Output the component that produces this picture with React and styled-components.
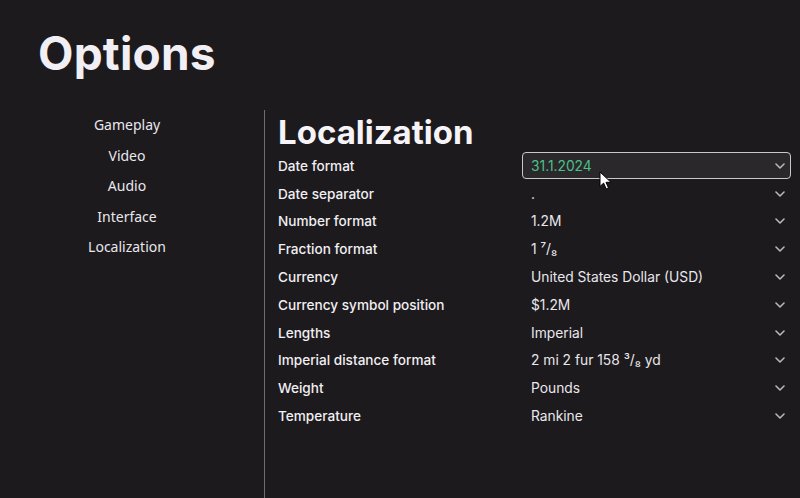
import React from "react";
import styled, { createGlobalStyle } from "styled-components";

const GlobalStyle = createGlobalStyle`
  html, body {
    margin: 0;
    padding: 0;
    background: #1c1a1d;
    height: 100%;
  }
  #root {
    min-height: 100%;
  }
`;

const sections = ["Gameplay", "Video", "Audio", "Interface", "Localization"];

const settings = [
  { label: "Date format", value: "31.1.2024", focused: true },
  { label: "Date separator", value: "." },
  { label: "Number format", value: "1.2M" },
  { label: "Fraction format", value: "1 ⁷/₈" },
  { label: "Currency", value: "United States Dollar (USD)" },
  { label: "Currency symbol position", value: "$1.2M" },
  { label: "Lengths", value: "Imperial" },
  { label: "Imperial distance format", value: "2 mi 2 fur 158 ³/₈ yd" },
  { label: "Weight", value: "Pounds" },
  { label: "Temperature", value: "Rankine" },
];

const Chevron = () => (
  <svg width="10" height="6" viewBox="0 0 10 6" fill="none">
    <path d="M1 1l4 4 4-4" stroke="#b8b6bb" strokeWidth="1.6" strokeLinecap="round" strokeLinejoin="round" />
  </svg>
);

const Pointer = () => (
  <svg width="13" height="19" viewBox="0 0 13 19">
    <path d="M1 1v14.5l3.6-3.4 2.6 5.8 2.3-1-2.5-5.6h5z" fill="#fff" stroke="#000" strokeWidth="1" strokeLinejoin="round" />
  </svg>
);

const App = () => {
  return (
    <>
      <GlobalStyle />
      <Page>
        <Title>Options</Title>
        <Body>
          <Sidebar>
            {sections.map((s) => (
              <NavItem key={s}>{s}</NavItem>
            ))}
          </Sidebar>
          <Content>
            <Heading>Localization</Heading>
            <List>
              {settings.map((item) => (
                <Row key={item.label}>
                  <Label>{item.label}</Label>
                  <Select focused={item.focused}>
                    <Value focused={item.focused}>{item.value}</Value>
                    <Chevron />
                    {item.focused && (
                      <Cursor>
                        <Pointer />
                      </Cursor>
                    )}
                  </Select>
                </Row>
              ))}
            </List>
          </Content>
        </Body>
      </Page>
    </>
  );
};

const Page = styled.div`
  width: 800px;
  height: 498px;
  overflow: hidden;
  background: #1c1a1d;
  display: flex;
  flex-direction: column;
  font-family: Inter, "Noto Sans", sans-serif;
  color: #f1eff3;
`;

const Title = styled.h1`
  margin: 0;
  padding: 24px 0 0 38px;
  height: 86px;
  box-sizing: border-box;
  font-size: 46px;
  font-weight: 700;
  letter-spacing: 0.2px;
  line-height: 58px;
  color: #f1eff4;
`;

const Body = styled.div`
  flex: 1;
  display: grid;
  grid-template-columns: 265px 1fr;
  margin-top: 24px;
`;

const Sidebar = styled.nav`
  display: flex;
  flex-direction: column;
  align-items: center;
  padding: 5px 10px 0 0;
  gap: 10.5px;
  border-right: 1px solid #6e6c71;
`;

const NavItem = styled.div`
  font-family: "Noto Sans", sans-serif;
  font-size: 14px;
  line-height: 20px;
  color: #e9e7ec;
`;

const Content = styled.section`
  padding: 2px 0 0 13px;
`;

const Heading = styled.h2`
  margin: 0;
  font-size: 33px;
  font-weight: 700;
  line-height: 40px;
  color: #f6f4f8;
`;

const List = styled.div`
  display: flex;
  flex-direction: column;
`;

const Row = styled.div`
  display: grid;
  grid-template-columns: 244px 269px;
  align-items: center;
  height: 27.8px;
`;

const Label = styled.div`
  font-size: 13.6px;
  font-weight: 500;
  color: #f1eff3;
`;

const Select = styled.div`
  position: relative;
  height: 27px;
  box-sizing: border-box;
  display: flex;
  align-items: center;
  justify-content: space-between;
  padding: 0 5px 0 8px;
  border-radius: 4px;
  border: 1px solid ${(p) => (p.focused ? "#c9c7cc" : "transparent")};
  background: ${(p) => (p.focused ? "#2a282b" : "transparent")};
`;

const Value = styled.span`
  font-size: 13.8px;
  color: ${(p) => (p.focused ? "#4cc08a" : "#e9e7ec")};
`;

const Cursor = styled.div`
  position: absolute;
  left: 76px;
  top: 18px;
  line-height: 0;
`;

export default App;
